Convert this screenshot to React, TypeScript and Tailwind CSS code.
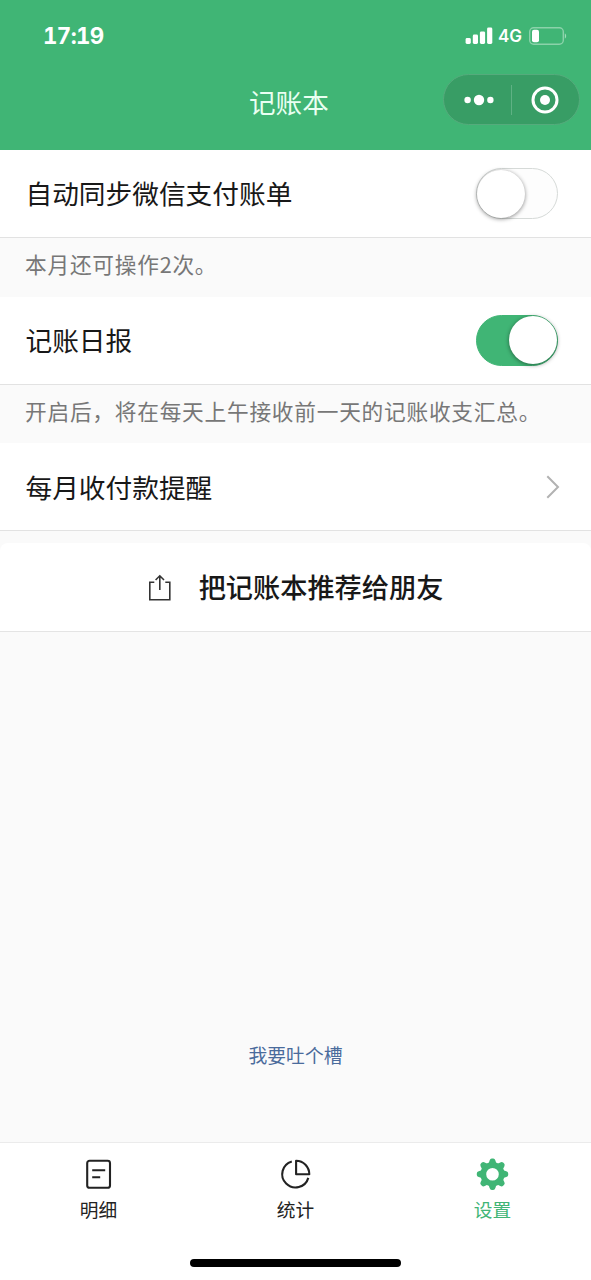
import { useState } from "react";
import type { ReactNode } from "react";
import clsx from "clsx";

const StatusBar = () => (
  <div className="flex h-[71px] items-center justify-between pl-[43px] pr-6 text-white">
    <span className="pt-[2px] font-['Inter'] text-[22.3px] font-bold leading-none tabular-nums tracking-[-0.6px]">
      17:19
    </span>
    <div className="flex items-center">
      <svg width="28" height="18" viewBox="0 0 28 18" fill="currentColor">
        <rect x="0.6" y="11" width="5.2" height="6" rx="1.4" />
        <rect x="7.8" y="7.6" width="5.2" height="9.4" rx="1.4" />
        <rect x="14.9" y="4.4" width="5.2" height="12.6" rx="1.4" />
        <rect x="22.1" y="0.6" width="5.2" height="16.4" rx="1.4" />
      </svg>
      <span className="ml-[5px] w-[25px] pt-[2px] font-['Inter'] text-[17px] font-semibold leading-none">
        4G
      </span>
      <svg width="38" height="18" viewBox="0 0 38 18" className="ml-[6px]">
        <rect x="0.7" y="0.7" width="33.6" height="16.6" rx="4" fill="none" stroke="#8bd2aa" strokeWidth="1.4" />
        <rect x="3" y="2.8" width="7" height="12.4" rx="2" fill="#fff" />
        <path d="M35.8 6.5c1.8.5 1.8 4.5 0 5z" fill="#a0dab9" />
      </svg>
    </div>
  </div>
);

const Header = () => (
  <header className="h-[150px] bg-[#40b575]">
    <StatusBar />
    <div className="flex h-[57px] items-center justify-between pl-[249px] pr-[11px] text-white">
      <h1 className="pt-[6px] text-[26.6px] leading-none text-[#e9fff2]">
        记账本
      </h1>
      <div className="flex h-[51px] w-[137px] items-center rounded-full border border-[#55ab7c] bg-[#389d65]">
        <button className="flex h-full w-[67px] items-center justify-center pl-[2px]">
          <svg width="32" height="12" viewBox="0 0 32 12" fill="currentColor">
            <circle cx="4.6" cy="6" r="3.2" />
            <circle cx="16" cy="6" r="5.2" />
            <circle cx="27.4" cy="6" r="3.2" />
          </svg>
        </button>
        <span className="h-[30px] w-px bg-[#5fb184]" />
        <button className="flex h-full flex-1 items-center justify-center pr-px">
          <svg width="28" height="28" viewBox="0 0 28 28">
            <circle cx="14" cy="14" r="12" fill="none" stroke="currentColor" strokeWidth="3" />
            <circle cx="14" cy="14" r="5" fill="currentColor" />
          </svg>
        </button>
      </div>
    </div>
  </header>
);

const Toggle = ({
  checked,
  onChange,
}: {
  checked: boolean;
  onChange: () => void;
}) => (
  <button
    role="switch"
    aria-checked={checked}
    onClick={onChange}
    className={clsx(
      "flex h-[51px] w-[82px] items-center rounded-full border",
      checked
        ? "justify-end border-[#40b575] bg-[#40b575]"
        : "justify-start border-[#d6dad8] bg-[#fdfdfd]"
    )}
  >
    <span className="size-[48px] rounded-full bg-white shadow-[0_1px_4px_rgba(0,0,0,0.45)]" />
  </button>
);

const Row = ({ label, children }: { label: string; children: ReactNode }) => (
  <div className="flex h-[88px] items-center justify-between border-b border-[#e2e2e2] bg-white pl-[25.5px] pr-[33px]">
    <span className="text-[26.7px] leading-none text-[#181818]">{label}</span>
    {children}
  </div>
);

const Hint = ({ children }: { children: ReactNode }) => (
  <p className="h-[58.7px] whitespace-nowrap pl-[25px] pt-[14px] text-[21.7px] leading-[24px] tracking-[0.75px] text-[#777]">
    {children}
  </p>
);

const DetailIcon = () => (
  <svg width="34" height="34" viewBox="0 0 34 34" fill="none" stroke="currentColor" strokeWidth="2.1">
    <rect x="5.2" y="3.8" width="22.8" height="27" rx="2.4" />
    <path d="M10.2 13.2h13M10.2 20.2h8" />
  </svg>
);

const StatsIcon = () => (
  <svg width="34" height="34" viewBox="0 0 34 34" fill="none" stroke="currentColor" strokeWidth="2.1" strokeLinejoin="round">
    <path d="M12.8 4.4A13.3 13.3 0 1 0 29.3 20.9" />
    <path d="M17.1 3.8v13.4h13.2C30.3 9.8 24.5 3.8 17.1 3.8z" />
  </svg>
);

const teeth = [0, 45, 90, 135, 180, 225, 270, 315];

const GearIcon = () => (
  <svg width="34" height="34" viewBox="0 0 34 34" fill="currentColor">
    <circle cx="16.5" cy="17.2" r="9.2" fill="none" stroke="currentColor" strokeWidth="5.8" />
    {teeth.map((angle) => (
      <path
        key={angle}
        d="M12.4 7.2 13.6 3.4Q14.2 1.5 15.8 1.5H17.2Q18.8 1.5 19.4 3.4L20.6 7.2z"
        transform={`rotate(${angle} 16.5 17.2)`}
      />
    ))}
  </svg>
);

const tabs = [
  { id: "detail", label: "明细", Icon: DetailIcon },
  { id: "stats", label: "统计", Icon: StatsIcon },
  { id: "settings", label: "设置", Icon: GearIcon },
];

function App() {
  const [autoSync, setAutoSync] = useState(false);
  const [daily, setDaily] = useState(true);
  const [active, setActive] = useState("settings");

  return (
    <div className="flex h-[1280px] w-[591px] flex-col overflow-hidden bg-[#fafafa] font-['Noto_Sans_CJK_SC',sans-serif]">
      <Header />

      <main className="flex flex-1 flex-col">
        <Row label="自动同步微信支付账单">
          <Toggle checked={autoSync} onChange={() => setAutoSync(!autoSync)} />
        </Row>
        <Hint>本月还可操作2次。</Hint>
        <Row label="记账日报">
          <Toggle checked={daily} onChange={() => setDaily(!daily)} />
        </Row>
        <Hint>开启后，将在每天上午接收前一天的记账收支汇总。</Hint>
        <Row label="每月收付款提醒">
          <svg width="14" height="24" viewBox="0 0 14 24" fill="none" stroke="#b2b2b2" strokeWidth="2" className="-mr-[2px]">
            <path d="M1.3 1.3 12 12 1.3 22.7" />
          </svg>
        </Row>

        <button className="mt-[12px] flex h-[89px] items-center justify-center rounded-t-lg border-b border-[#e4e4e4] bg-white">
          <svg width="24" height="28" viewBox="0 0 24 28" fill="none" stroke="#333" strokeWidth="1.6" className="mt-px">
            <path d="M6.3 8.2H1.8v17.6h20V8.2h-4.5M11.8 16V1.8M7.6 6l4.2-4.2L16 6" />
          </svg>
          <span className="ml-[27px] pb-[2px] text-[27.2px] font-medium leading-none text-[#181818]">
            把记账本推荐给朋友
          </span>
        </button>

        <a className="mb-[76px] mt-auto text-center text-[18.8px] leading-[22px] text-[#4a6b9c]">
          我要吐个槽
        </a>
      </main>

      <nav className="grid h-[138px] grid-cols-3 items-start border-t border-[#ebebeb] bg-white pt-[14px]">
        {tabs.map(({ id, label, Icon }) => (
          <button
            key={id}
            onClick={() => setActive(id)}
            className={clsx(
              "flex flex-col items-center",
              active === id ? "text-[#40b575]" : "text-[#222]"
            )}
          >
            <Icon />
            <span className="mt-[8px] text-[18.7px] leading-[20px]">
              {label}
            </span>
          </button>
        ))}
      </nav>

      <div className="fixed bottom-[13px] left-[190px] h-[8px] w-[211px] rounded-full bg-black" />
    </div>
  );
}

export default App;
